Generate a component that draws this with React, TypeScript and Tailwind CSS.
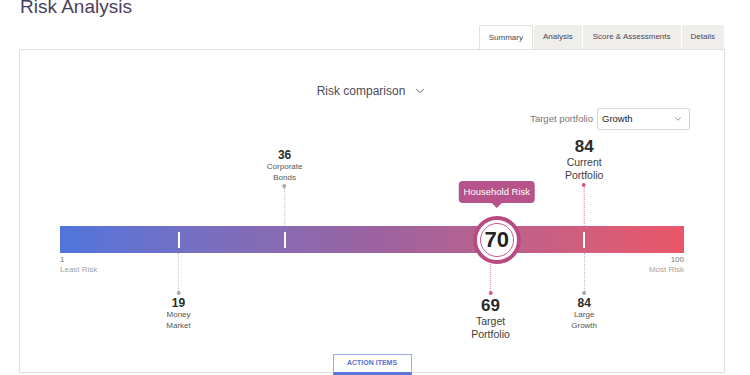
import { ChevronDown } from "lucide-react";

type Marker = {
  v: number;
  num: string;
  lines: string[];
  big?: boolean;
  pink?: boolean;
};

const above: Marker[] = [
  { v: 36, num: "36", lines: ["Corporate", "Bonds"] },
  { v: 84, num: "84", lines: ["Current", "Portfolio"], big: true, pink: true },
];

const below: Marker[] = [
  { v: 19, num: "19", lines: ["Money", "Market"] },
  { v: 69, num: "69", lines: ["Target", "Portfolio"], big: true, pink: true },
  { v: 84, num: "84", lines: ["Large", "Growth"] },
];

const ticks = [19, 36, 84];

function Dot({ pink }: { pink?: boolean }) {
  return <div className={`w-[4px] h-[4px] rounded-full ${pink ? "bg-[#d65b8c]" : "bg-[#a9a9a9]"}`} />;
}

function Stem({ pink, h }: { pink?: boolean; h: string }) {
  return <div className={`w-0 border-l border-dotted ${pink ? "border-[#e07ea2]" : "border-[#bdbdbd]"} ${h}`} />;
}

function Label({ m }: { m: Marker }) {
  return (
    <>
      <div className={`font-bold text-[#2b2b2b] ${m.big ? "text-[17px] leading-[18px]" : "text-[12px] leading-[14px]"}`}>{m.num}</div>
      <div className={`text-center ${m.big ? "text-[10.5px] leading-[13px] text-[#3d3d3d]" : "text-[8px] leading-[10.5px] text-[#555]"}`}>
        {m.lines.map((l) => (
          <div key={l}>{l}</div>
        ))}
      </div>
    </>
  );
}

export default function App() {
  return (
    <div className="w-[750px] h-[375px] overflow-hidden bg-white font-['Liberation_Sans',Arial,sans-serif]">
      <div className="flex h-[25px] pl-[20px]">
        <h1 className="-mt-[3px] text-[19px] leading-[19px] text-[#4b3f5c]">Risk Analysis</h1>
      </div>

      <div className="flex justify-end gap-[1px] pr-[26px] h-[24px] text-[8px] text-[#4a4455]">
        <div className="px-[9px] flex items-center bg-white border border-b-0 border-[#e3e0dc] rounded-t-[2px]">Summary</div>
        <div className="px-[9px] flex items-center bg-[#f0eeeb] rounded-t-[2px]">Analysis</div>
        <div className="px-[10px] flex items-center bg-[#f0eeeb] rounded-t-[2px]">Score &amp; Assessments</div>
        <div className="px-[9px] flex items-center bg-[#f0eeeb] rounded-t-[2px]">Details</div>
      </div>

      <div className="ml-[19px] w-[706px] h-[324px] border border-[#e3e0dc] flex flex-col">
        <div className="pt-[31px] h-[51px] flex justify-center">
          <div className="h-[20px] flex items-center gap-[8px] text-[12px] text-[#4d4a57]">
            Risk comparison
            <ChevronDown size={14} strokeWidth={1.5} />
          </div>
        </div>

        <div className="mt-[7px] h-[22px] flex justify-end items-center pr-[34px] gap-[4px]">
          <span className="text-[9.5px] text-[#777]">Target portfolio</span>
          <div className="w-[93px] h-[22px] border border-[#d6d6d6] rounded-[2px] flex items-center justify-between pl-[4px] pr-[6px] text-[9.5px] text-[#222]">
            Growth
            <ChevronDown size={10} strokeWidth={1.5} className="text-[#555]" />
          </div>
        </div>

        <div className="px-[40px]">
          <div className="relative h-[96px]">
            {above.map((m) => (
              <div
                key={m.v + m.num + m.lines[0]}
                className="absolute bottom-0 -translate-x-1/2 flex flex-col items-center"
                style={{ left: `${m.v}%` }}
              >
                <Label m={m} />
                <div className="mt-[1px]">
                  <Dot pink={m.pink} />
                </div>
                <Stem pink={m.pink} h={m.big ? "h-[39px]" : "h-[38px]"} />
              </div>
            ))}
          </div>

          <div className="relative h-[27px] bg-gradient-to-r from-[#4f75dc] via-[#9b63a1] to-[#ea5668]">
            {ticks.map((t) => (
              <div
                key={t}
                className="absolute top-[6px] h-[16px] w-[2px] -translate-x-1/2 bg-white"
                style={{ left: `${t}%` }}
              />
            ))}
            <div
              className="absolute bottom-[45px] -translate-x-1/2 flex flex-col items-center z-10"
              style={{ left: "70%" }}
            >
              <div className="h-[22px] px-[5px] flex items-center rounded-[4px] bg-[#b6538a] text-white text-[9.5px] whitespace-nowrap">
                Household Risk
              </div>
              <div className="w-0 h-0 border-x-[5px] border-x-transparent border-t-[5px] border-t-[#b6538a]" />
            </div>
            <div
              className="absolute top-1/2 -translate-x-1/2 -translate-y-1/2 z-10 w-[48px] h-[48px] rounded-full border-[4px] border-[#b84c82] bg-white flex items-center justify-center"
              style={{ left: "70%" }}
            >
              <div className="w-[34px] h-[34px] rounded-full border border-[#c65a90] flex items-center justify-center text-[22px] font-bold text-[#222]">
                70
              </div>
            </div>
          </div>

          <div className="relative h-[101px]">
            <div className="flex justify-between pt-[2px] text-[8px] leading-[10px]">
              <div>
                <div className="text-[#777]">1</div>
                <div className="text-[#a3a3a3]">Least Risk</div>
              </div>
              <div className="text-right">
                <div className="text-[#777]">100</div>
                <div className="text-[#a3a3a3]">Most Risk</div>
              </div>
            </div>
            {below.map((m) => (
              <div
                key={m.v + m.num + m.lines[0]}
                className="absolute top-0 -translate-x-1/2 flex flex-col items-center"
                style={{ left: `${m.v}%` }}
              >
                <Stem pink={m.pink} h="h-[38px]" />
                <Dot pink={m.pink} />
                <div className={m.big ? "mt-[2px] flex flex-col items-center" : "mt-[1px] flex flex-col items-center"}>
                  <Label m={m} />
                </div>
              </div>
            ))}
          </div>
        </div>

        <div className="flex justify-center">
          <div className="relative -mb-[3px] h-[21px] w-[79px] border border-[#9aabee] border-b-[3px] border-b-[#5a74d8] bg-white flex items-center justify-center text-[7px] font-semibold text-[#5b6fd0]">
            ACTION ITEMS
          </div>
        </div>
      </div>
    </div>
  );
}
